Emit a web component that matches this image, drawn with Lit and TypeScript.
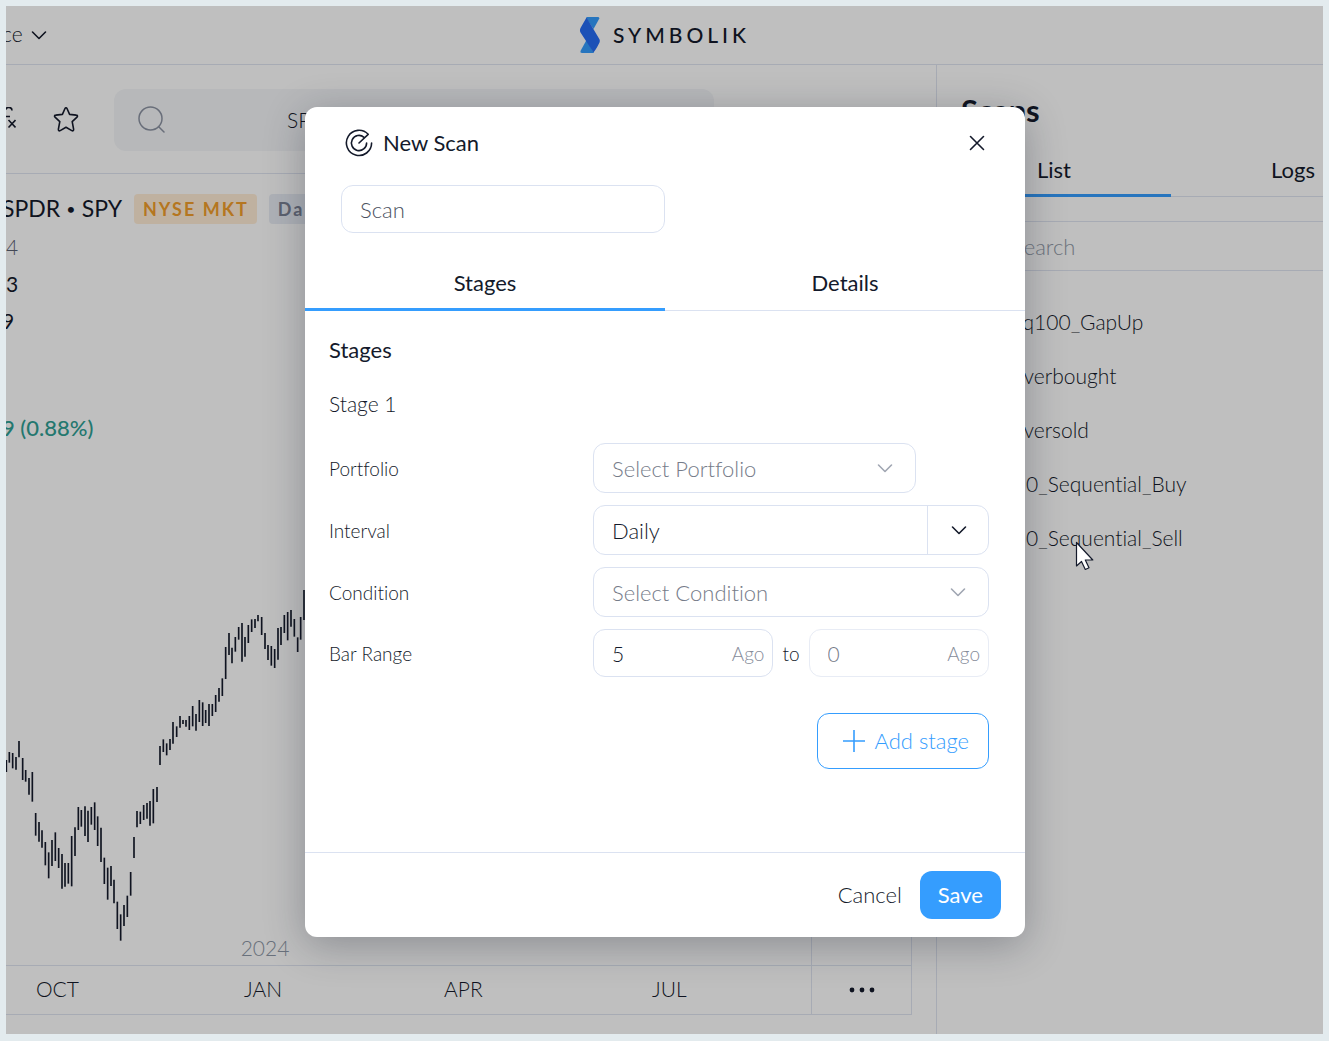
import { LitElement, html, css, svg } from "lit";
import { customElement, state } from "lit/decorators.js";

const INK = css`#141a2b`;

/* Price bars: x, high, low (three units per pixel). */
const BARS: number[][] = [
  [19, 570, 606], [28, 546, 578], [38, 549, 595], [48, 561, 599], [57, 513, 562], [68, 564, 630],
  [77, 600, 635], [87, 624, 674], [97, 606, 695], [107, 729, 797], [117, 756, 815], [126, 781, 833],
  [136, 816, 886], [146, 847, 925], [156, 810, 888], [166, 787, 873], [176, 834, 894], [186, 852, 956],
  [195, 879, 950], [205, 879, 941], [215, 798, 949], [225, 772, 858], [235, 711, 780], [244, 720, 770],
  [255, 709, 798], [264, 722, 816], [274, 711, 764], [284, 697, 780], [293, 739, 828], [303, 773, 876],
  [313, 863, 942], [323, 893, 989], [333, 888, 948], [342, 929, 1000], [352, 995, 1077], [362, 1033, 1112],
  [372, 1005, 1068], [382, 977, 1041], [392, 906, 977], [402, 801, 864], [411, 723, 772], [421, 725, 762],
  [431, 705, 750], [441, 699, 746], [450, 693, 767], [460, 657, 760], [471, 651, 696], [480, 528, 585],
  [490, 508, 546], [500, 520, 556], [510, 507, 540], [519, 456, 521], [530, 469, 501], [540, 438, 473],
  [549, 450, 462], [558, 450, 470], [568, 438, 480], [578, 408, 469], [588, 432, 482], [598, 390, 456],
  [608, 397, 468], [617, 420, 459], [627, 402, 468], [637, 402, 438], [647, 375, 426], [657, 354, 395],
  [667, 325, 378], [677, 231, 327], [687, 189, 255], [696, 233, 280], [706, 201, 245], [716, 171, 209],
  [726, 159, 275], [735, 201, 260], [745, 165, 219], [755, 148, 186], [765, 147, 174], [774, 135, 154],
  [785, 141, 195], [795, 189, 237], [804, 225, 270], [814, 228, 287], [824, 237, 294], [834, 174, 269],
  [843, 171, 225], [853, 135, 189], [863, 126, 211], [873, 120, 170], [883, 147, 200], [893, 202, 246],
  [902, 141, 209], [912, 60, 150],
];

const base = css`
  * { box-sizing: border-box; }
  button, input, select {
    font: inherit;
    color: inherit;
    background: none;
    border: 0;
    margin: 0;
    padding: 0;
    outline: none;
  }
  button { cursor: pointer; }
  svg { display: block; flex: none; }
  h1, h2, h3, ul { margin: 0; padding: 0; font-weight: inherit; font-size: inherit; }
`;

const chevron = () => html`
  <svg width="16" height="10" viewBox="0 0 16 10" fill="none" stroke="currentColor" stroke-width="1.6"
    stroke-linecap="round" stroke-linejoin="round" aria-hidden="true">
    <path d="M1.500 2 8 8.500 14.500 2" />
  </svg>`;

@customElement("scan-workspace")
export class ScanWorkspace extends LitElement {
  static styles = [base, css`
    :host { display: flex; flex-direction: column; min-width: 0; color: ${INK}; background: #fff; overflow: hidden; }
    .header {
      display: grid; grid-template-columns: 1fr auto 1fr; align-items: center;
      height: 59px; border-bottom: 1px solid #dfe4f0;
    }
    .menu { display: flex; align-items: center; gap: 8px; margin-left: -4px; justify-self: start; font-weight: 300; font-size: 21px; line-height: 24px; }
    .menu span { padding-bottom: 2px; }
    .brand { display: flex; align-items: center; gap: 12px; font-size: 21px; line-height: 24px; font-weight: 500; letter-spacing: 4px; color: ${INK}; text-decoration: none; }
    .body { flex: 1; display: grid; grid-template-columns: 1fr 387px; min-height: 0; }
    .main { display: flex; flex-direction: column; min-width: 0; }
    .toolbar {
      display: flex; align-items: center; height: 109px; padding-top: 1px;
      border-bottom: 1px solid #dfe4f0;
    }
    .star { margin-left: 37px; }
    .search {
      display: flex; align-items: center; gap: 122px; width: 600px; height: 62px;
      margin-left: 35px; padding: 0 24px; border-radius: 12px; background: #f4f6f8;
    }
    .search input { flex: 1; min-width: 0; font-size: 21px; font-weight: 300; }
    .search svg { color: #8c93a3; }
    .tools { display: flex; gap: 36px; margin-left: 90px; }
    .chart { flex: 1; display: grid; grid-template-columns: 1fr 101px 24px; grid-template-rows: 1fr 49px 19px; min-height: 0; }
    .plot { display: flex; flex-direction: column; justify-content: space-between; min-width: 0; overflow: hidden; border-bottom: 1px solid #dfe4f0; }
    .scale { border: 1px solid #dfe4f0; border-top: 0; }
    .axis {
      grid-column: 1; display: grid; grid-template-columns: 208px 200px 208px 1fr; align-items: center;
      padding: 0 0 4px 30px; border-bottom: 1px solid #dfe4f0; font-size: 21px; font-weight: 300;
    }
    .more { grid-column: 2; display: grid; place-items: center; border: 1px solid #dfe4f0; border-top: 0; }
    .legend { display: flex; flex-direction: column; font-size: 21px; }
    .title { display: flex; align-items: center; gap: 12px; height: 70px; margin-left: -4px; white-space: nowrap; }
    .title h1 { font-size: 23px; line-height: 28px; padding-bottom: 2px; font-weight: 400; }
    .dot { font-size: 16px; padding: 0 2px; vertical-align: 2px; }
    .badge { font-size: 18px; line-height: 30px; font-weight: 700; letter-spacing: 2px; padding: 0 8px 0 9px; border-radius: 4px; background: #e9edf4; color: #7b8294; }
    .badge.market { background: #ffedd6; color: #f29e2b; }
    .line { line-height: 37px; }
    .muted { line-height: 6px; font-weight: 300; padding-bottom: 15px; color: #5a6072; }
    .bleed { margin-left: -4px; }
    .gain { margin-top: 70px; font-size: 22px; font-weight: 500; color: #2fa094; }
    .bars { stroke: ${INK}; stroke-width: 5; }
    .year { font-size: 63px; font-weight: 300; fill: #8d97a6; }
    .side { border-left: 1px solid #dfe4f0; min-width: 0; overflow: hidden; }
    .side h2 { padding: 26px 24px 0; font-size: 31px; line-height: 38px; margin-bottom: 16px; font-weight: 700; }
    .tabs { display: grid; grid-template-columns: 234px 244px; border-bottom: 1px solid #dfe4f0; font-size: 22px; }
    .tabs button { height: 52px; padding-bottom: 1px; border-bottom: 3px solid transparent; margin-bottom: -1px; }
    .tabs .on { border-color: #359dfe; }
    .filter { margin-top: 24px; height: 50px; padding-left: 75px; border: 1px solid #dfe4f0; border-width: 1px 0; }
    .filter input { width: 100%; height: 48px; font-size: 22px; font-weight: 300; }
    .filter input::placeholder { color: #929ba8; opacity: 1; }
    .list { list-style: none; margin-top: 24px; font-size: 21px; font-weight: 300; }
    .list li { padding-left: 70px; line-height: 54px; }
  `];

  render() {
    return html`
      <header class="header">
        <button class="menu"><span>ce</span>${chevron()}</button>
        <a class="brand" href="#">
          <svg width="22" height="38" viewBox="0 0 22 38" aria-hidden="true">
            <path d="M8 1h11.500l1 1.200L14.500 13 7 2Z" fill="#359dfe" />
            <path d="M7.500 24 1.500 35v1.500L3 37h12Z" fill="#359dfe" />
            <path d="M7.500 1.500 1.500 12c-.7 1.500-.7 3 0 4.500L14.500 36.500c3-4 4.500-7 6-10 .5-1.500.5-2.500-.5-4Z" fill="#266cf5" />
          </svg>
          <span>SYMBOLIK</span>
        </a>
      </header>
      <div class="body">
        <main class="main">
          <div class="toolbar">
            <button aria-label="Functions">
              <svg width="10" height="26" viewBox="0 0 10 26" fill="none" stroke="currentColor" stroke-width="1.6">
                <path d="M0 2.500C.5-.500 6 -.500 6 3.500M0 9.500h4M2.500 13 9.500 20.500M9.500 13 2.500 20.500" />
              </svg>
            </button>
            <button class="star" aria-label="Favorite">
              <svg width="26" height="26" viewBox="0 0 26 26" fill="none" stroke="currentColor" stroke-width="1.6" stroke-linejoin="round">
                <path d="M12 1.500c.4-.9 1.600-.9 2 0l2.600 5.900 6.600.7c1.300.1 1.700 1.200.8 2l-4.800 4.500 1.400 7.600c.2 1.300-.6 2-1.800 1.400L13 20.300l-5.800 3.300c-1.200.6-2-.1-1.800-1.400l1.400-7.600L2 10.100c-.9-.8-.5-1.900.8-2l6.600-.7Z" />
              </svg>
            </button>
            <label class="search">
              <svg width="27" height="27" viewBox="0 0 27 27" fill="none" stroke="currentColor" stroke-width="1.500" stroke-linecap="round" aria-hidden="true">
                <circle cx="12.500" cy="12.500" r="11.500" /><path d="m21 21 5 5" />
              </svg>
              <input aria-label="Symbol" .value=${"SPY"} />
            </label>
            <div class="tools" aria-hidden="true">
              <svg width="26" height="26" viewBox="0 0 26 26" fill="none" stroke="currentColor" stroke-width="2"><path d="M11 0v24" /></svg>
              <svg width="26" height="26" viewBox="0 0 26 26" fill="none" stroke="currentColor" stroke-width="2"><path d="M10 0v24" /></svg>
            </div>
          </div>
          <div class="chart">
            <div class="plot">
              <div class="legend">
                <div class="title"><h1>SPDR<span class="dot"> • </span>SPY</h1><span class="badge market">NYSE MKT</span><span class="badge">Daily</span></div>
                <div class="muted">4</div>
                <div class="line">3</div>
                <div class="line bleed">9</div>
                <div class="line bleed gain">9 (0.88%)</div>
              </div>
              <svg width="805" height="395" viewBox="18 0 2415 1185" role="img" aria-label="Price chart">
                <g class="bars">${BARS.map(([x, a, b]) => svg`<path d="M${x} ${a}V${b}" />`)}</g>
                <text class="year" x="795" y="1157" text-anchor="middle">2024</text>
              </svg>
            </div>
            <div class="scale"></div>
            <div class="axis"><span>OCT</span><span>JAN</span><span>APR</span><span>JUL</span></div>
            <button class="more" aria-label="More">
              <svg width="26" height="6" viewBox="0 0 26 6" fill="currentColor"><circle cx="3" cy="3" r="2.400" /><circle cx="13" cy="3" r="2.400" /><circle cx="23" cy="3" r="2.400" /></svg>
            </button>
          </div>
        </main>
        <aside class="side">
          <h2>Scans</h2>
          <div class="tabs"><button class="on">List</button><button>Logs</button></div>
          <div class="filter"><input type="search" placeholder="Search" aria-label="Search" /></div>
          <ul class="list">
            ${["Nq100_GapUp", "Overbought", "Oversold", "M0_Sequential_Buy", "M0_Sequential_Sell"].map((n) => html`<li>${n}</li>`)}
          </ul>
        </aside>
      </div>`;
  }
}

@customElement("new-scan-dialog")
export class NewScanDialog extends LitElement {
  @state() private tab = "Stages";

  static styles = [base, css`
    :host {
      display: block; width: 720px; max-width: 100%; color: ${INK}; background: #fff;
      border-radius: 12px; box-shadow: 0 8px 40px rgba(20, 26, 43, 0.3); overflow: hidden;
      font-size: 21px; font-weight: 300;
    }
    .head { display: flex; align-items: center; gap: 10px; height: 72px; padding: 0 36px 0 40px; }
    .head h2 { flex: 1; padding-bottom: 2px; font-size: 22px; font-weight: 400; }
    .close { display: grid; place-items: center; width: 24px; height: 24px; }
    .name { padding: 6px 36px 24px; }
    .box { border: 1px solid #dbe2f1; border-radius: 12px; height: 50px; }
    .name input { width: 324px; height: 48px; padding: 0 18px; font-size: 22px; color: #4b5160; }
    .tabs { display: grid; grid-template-columns: 1fr 1fr; border-bottom: 1px solid #dbe2f1; }
    .tabs button { height: 54px; margin-bottom: -1px; border-bottom: 3px solid transparent; font-size: 22px; font-weight: 400; }
    .tabs .on { border-color: #359dfe; }
    .body { padding: 24px 36px 83px 24px; }
    .body h3 { line-height: 30px; font-size: 22px; font-weight: 400; }
    .sub { line-height: 30px; margin-top: 24px; }
    .form { display: grid; grid-template-columns: 264px 1fr; gap: 12px 0; align-items: center; margin-top: 24px; }
    .label { font-size: 19px; }
    .select { display: grid; grid-template-columns: 1fr 62px; align-items: stretch; }
    .select select { grid-area: 1 / 1 / 2 / 3; appearance: none; padding: 0 18px; border-radius: 12px; font-size: 22px; }
    .select .mark { grid-area: 1 / 2; display: grid; place-items: center; pointer-events: none; }
    .split .mark { border-left: 1px solid #dbe2f1; }
    .short { margin-right: 73px; }
    .empty select { color: #767c89; }
    .empty .mark { color: #a0a6b2; }
    .range { display: grid; grid-template-columns: 1fr auto 1fr; align-items: center; gap: 9px; font-size: 19px; }
    .num { display: flex; align-items: center; height: 48px; padding: 0 8px 0 18px; color: #868c9a; }
    .num input { flex: 1; min-width: 0; width: 0; font-size: 21px; color: ${INK}; }
    .off { border-color: #e8ecf5; }
    .off input { color: #767c89; }
    .actions { display: flex; justify-content: flex-end; margin-top: 36px; }
    .add { display: flex; align-items: center; gap: 9px; height: 56px; padding: 0 19px 0 24px; border: 1px solid #359dfe; border-radius: 12px; color: #359dfe; font-size: 22px; }
    .add span { padding-bottom: 2px; }
    .foot { display: flex; justify-content: flex-end; align-items: center; gap: 18px; padding: 18px 24px; border-top: 1px solid #dbe2f1; font-size: 22px; }
    .foot button { height: 48px; padding-bottom: 2px; }
    .foot .save { padding: 0 18px 2px; border-radius: 12px; background: #359dfe; color: #fff; font-weight: 400; }
  `];

  render() {
    return html`
      <div class="head">
        <svg width="28" height="28" viewBox="0 0 28 28" fill="none" stroke="currentColor" stroke-width="1.600" stroke-linecap="round" stroke-linejoin="round" aria-hidden="true">
          <path d="M14 14l9.200-8.700A12.600 12.600 0 1 0 26.600 14" />
          <path d="M19 8.300A7.600 7.600 0 1 0 21.600 14" />
        </svg>
        <h2>New Scan</h2>
        <button class="close" aria-label="Close">
          <svg width="16" height="16" viewBox="0 0 16 16" fill="none" stroke="currentColor" stroke-width="1.600" stroke-linecap="round"><path d="M1.500 1.500l13 13M14.500 1.500l-13 13" /></svg>
        </button>
      </div>
      <div class="name"><input class="box" aria-label="Scan name" .value=${"Scan"} /></div>
      <div class="tabs" role="tablist">
        ${["Stages", "Details"].map((t) => html`
          <button role="tab" aria-selected=${this.tab === t} class=${this.tab === t ? "on" : ""} @click=${() => (this.tab = t)}>${t}</button>`)}
      </div>
      <div class="body">
        <h3>Stages</h3>
        <div class="sub">Stage 1</div>
        <div class="form">
          <label class="label" for="portfolio">Portfolio</label>
          <div class="select short empty">
            <select id="portfolio" class="box"><option>Select Portfolio</option></select>
            <span class="mark">${chevron()}</span>
          </div>
          <label class="label" for="interval">Interval</label>
          <div class="select split">
            <select id="interval" class="box"><option>Daily</option></select>
            <span class="mark">${chevron()}</span>
          </div>
          <label class="label" for="condition">Condition</label>
          <div class="select empty">
            <select id="condition" class="box"><option>Select Condition</option></select>
            <span class="mark">${chevron()}</span>
          </div>
          <label class="label" for="from">Bar Range</label>
          <div class="range">
            <div class="box num"><input id="from" .value=${"5"} /><span>Ago</span></div>
            <label for="to">to</label>
            <div class="box num off"><input id="to" .value=${"0"} /><span>Ago</span></div>
          </div>
        </div>
        <div class="actions">
          <button class="add">
            <svg width="24" height="24" viewBox="0 0 24 24" fill="none" stroke="currentColor" stroke-width="1.600" aria-hidden="true"><path d="M12 1v22M1 12h22" /></svg>
            <span>Add stage</span>
          </button>
        </div>
      </div>
      <div class="foot"><button>Cancel</button><button class="save">Save</button></div>`;
  }
}

@customElement("app-root")
export class AppRoot extends LitElement {
  static styles = [base, css`
    :host { display: block; font-family: Lato, "Liberation Sans", sans-serif; font-variant-ligatures: none; }
    .page { display: grid; min-height: 100vh; padding: 6px 6px 7px; background: #e3ebee; }
    .frame { display: grid; position: relative; min-width: 0; overflow: hidden; }
    .overlay { position: absolute; inset: 0; display: grid; place-items: center; padding: 4px 0 0 1px; background: rgba(0, 0, 0, 0.25); }
    .cursor { position: absolute; left: 1069px; top: 535px; }
  `];

  render() {
    return html`
      <div class="page">
        <div class="frame">
          <scan-workspace></scan-workspace>
          <div class="overlay"><new-scan-dialog role="dialog" aria-label="New Scan"></new-scan-dialog></div>
          <svg class="cursor" width="20" height="30" viewBox="0 0 20 30" aria-hidden="true">
            <path d="M1.500 1.500v23.500l5-4.500 3.800 8 3.700-1.700-3.700-7.800h7.500Z" fill="#fff" stroke="#141a2b" stroke-width="1.200" stroke-linejoin="round" />
          </svg>
        </div>
      </div>`;
  }
}
